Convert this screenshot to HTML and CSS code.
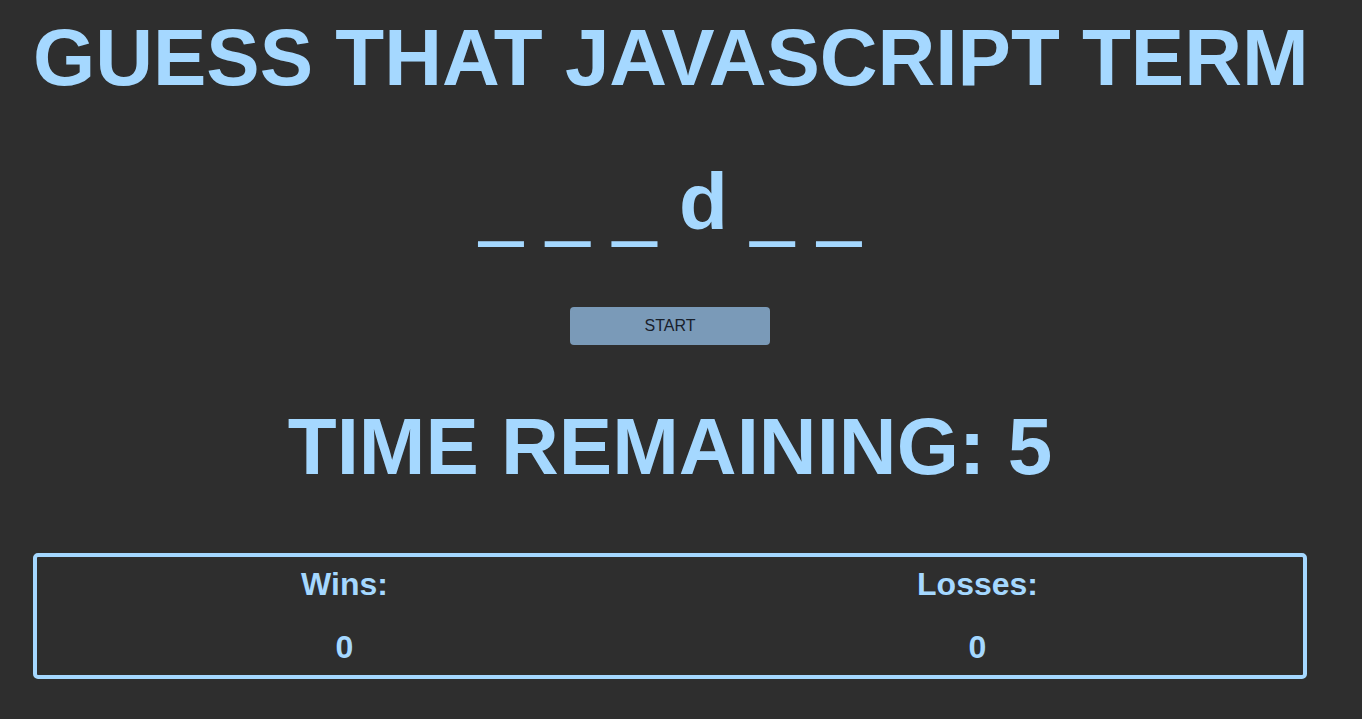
FILE: index.html
```html
<!DOCTYPE html>
<html lang="en">
<head>
<meta charset="utf-8">
<title>Guess That JavaScript Term</title>
<link rel="stylesheet" href="styles.css">
</head>
<body>
<div class="container">
  <h1 class="title">GUESS THAT JAVASCRIPT TERM</h1>
  <div class="word"><span class="blank">_</span> <span class="blank">_</span> <span class="blank">_</span> d <span class="blank">_</span> <span class="blank">_</span></div>
  <button class="start-btn" type="button">START</button>
  <div class="timer">TIME REMAINING: 5</div>
  <div class="scoreboard">
    <div class="score">
      <div class="score-label">Wins:</div>
      <div class="score-value">0</div>
    </div>
    <div class="score">
      <div class="score-label">Losses:</div>
      <div class="score-value">0</div>
    </div>
  </div>
</div>
</body>
</html>
```

FILE: styles.css
```css
html, body {
  margin: 0;
  padding: 0;
  background: #2e2e2e;
}

body {
  font-family: "Liberation Sans", Arial, sans-serif;
  color: #a5d8ff;
}

.container {
  width: 1274px;
  margin-left: 33px;
  padding-top: 12px;
}

.title,
.word,
.timer {
  margin: 0;
  font-size: 80px;
  line-height: 92px;
  font-weight: 700;
  text-align: center;
  white-space: pre;
}

.word {
  margin-top: 52px;
}

.blank {
  display: inline-block;
  transform-origin: 50% 80px;
  transform: translateY(5px) scaleY(1.9);
}

.start-btn {
  display: block;
  width: 200px;
  height: 38px;
  margin: 59px auto 0;
  padding: 0;
  border: none;
  border-radius: 4px;
  background: #7a9ab8;
  color: #18202b;
  font-family: "Liberation Sans", Arial, sans-serif;
  font-size: 16px;
}

.timer {
  margin-top: 56px;
}

.scoreboard {
  margin-top: 60px;
  border: 4px solid #a5d8ff;
  border-radius: 5px;
  display: grid;
  grid-template-columns: 1fr 1fr;
  padding: 9px 0;
}

.score {
  padding-right: 18px;
  text-align: center;
}

.score-label,
.score-value {
  font-size: 32px;
  line-height: 37px;
  font-weight: 700;
}

.score-value {
  margin-top: 26px;
}
```
